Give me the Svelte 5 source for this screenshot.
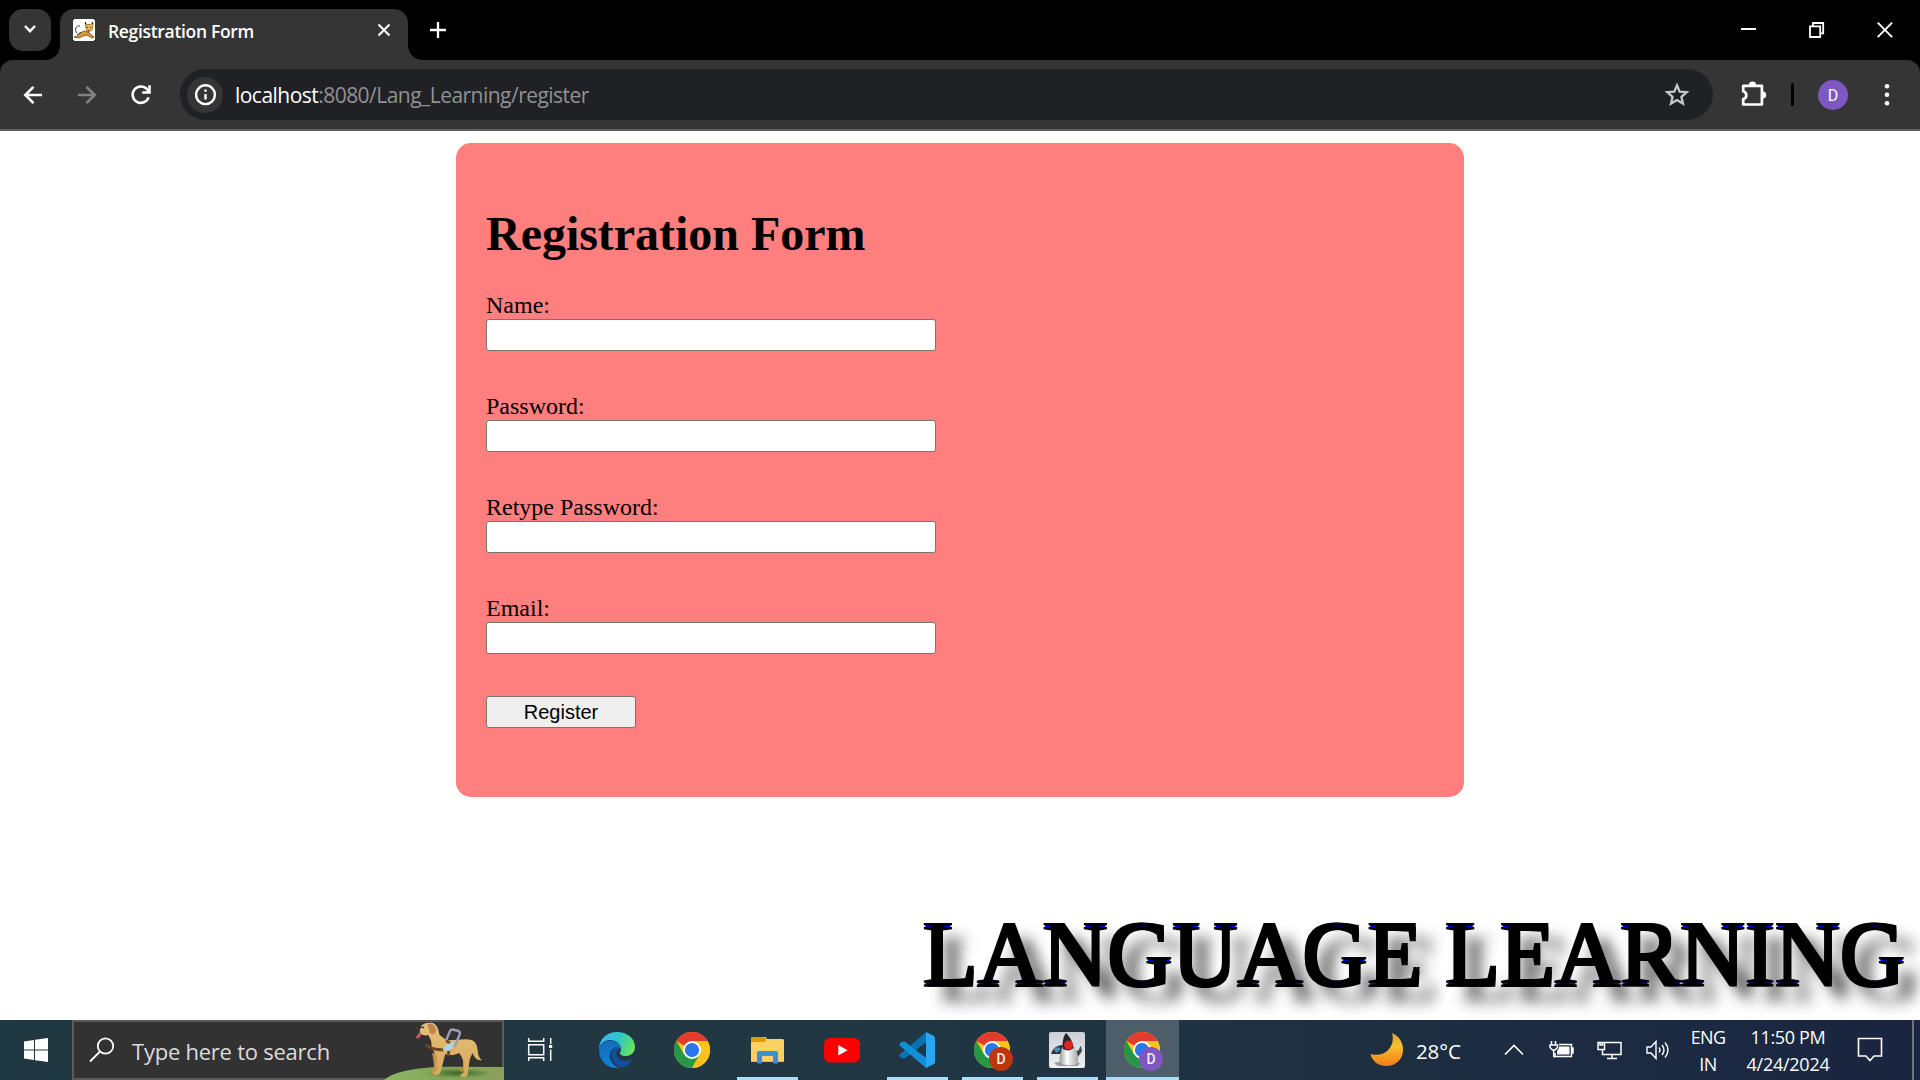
<script>
  const fields = [
    { id: 'name', label: 'Name:', type: 'text' },
    { id: 'password', label: 'Password:', type: 'password' },
    { id: 'retype', label: 'Retype Password:', type: 'password' },
    { id: 'email', label: 'Email:', type: 'text' },
  ];
  const apps = [
    { icon: 'taskview' },
    { icon: 'edge' },
    { icon: 'chrome' },
    { icon: 'folder', open: true },
    { icon: 'youtube' },
    { icon: 'vscode', open: true },
    { icon: 'chrome', open: true, badge: 'red' },
    { icon: 'duke', open: true },
    { icon: 'chrome', open: true, active: true, badge: 'purple' },
  ];
</script>

{#snippet chromeLogo()}
  <svg width="36" height="36" viewBox="0 0 48 48">
    <circle cx="24" cy="24" r="24" fill="#fcc31e" />
    <path d="M24 24 3.2 12A24 24 0 0 1 44.8 12H24z" fill="#e33b2e" />
    <path d="M3.2 12A24 24 0 0 0 24 48L34.4 30 24 24 13.6 30z" fill="#269746" />
    <path d="M24 12H44.8A24 24 0 0 1 24 48L34.4 30z" fill="#fcc31e" />
    <circle cx="24" cy="24" r="12" fill="#fff" />
    <circle cx="24" cy="24" r="9.5" fill="#2a76ea" />
  </svg>
{/snippet}

<div class="screen">
  <header class="tabs">
    <div class="tab-search">
      <svg width="42" height="42" fill="none" stroke="#fff" stroke-width="2.4"><path d="m16 19 5 5.2 5-5.2" /></svg>
    </div>
    <div class="tab">
      <svg class="fav" width="22" height="22" viewBox="0 0 22 22">
        <path fill="#fff" d="M0 0h22v22H0z" />
        <path d="m12 4 2 1.500h3.500L20 3.500l-.5 7-3 2.500-3-1.500z" fill="#e9b548" stroke="#8a6426" stroke-width=".8" />
        <path d="M1 18c4 0 5-4 10-6l4 1 6 5-2 1-5-3-4 1-4 2z" fill="#d89c35" stroke="#68461c" stroke-width=".8" />
        <path d="M4 14C1 11 3 6 7 7m-3 9 4-3m6-5 1 1m2-1 1 1m-3 2 1 1" fill="none" stroke="#333" stroke-width="1" />
        <path d="M0 0h1v1H0zM21 0h1v1h-1zM0 21h1v1H0zM21 21h1v1h-1zM12 3h1v2h-1zM19 3h1v2h-1z" fill="#222" />
      </svg>
      <span class="tab-title">Registration Form</span>
      <svg class="tab-close" width="14" height="14" stroke="#fff" stroke-width="2.1"><path d="m1.5 1.5 11 11m0-11-11 11" /></svg>
    </div>
    <svg class="plus" width="16" height="16" stroke="#fff" stroke-width="2.3"><path d="M8 0v16M0 8h16" /></svg>
    <div class="win">
      <svg width="16" height="16" fill="#fff"><path d="M0 6h15v2H0z" /></svg>
      <svg width="16" height="16" fill="none" stroke="#fff" stroke-width="1.8"><path d="M1 4.4h10.2V15H1zM4 4V1h10.2v10.4h-3" /></svg>
      <svg width="16" height="16" fill="none" stroke="#fff" stroke-width="1.9"><path d="m.7.7 14.4 14.4m0-14.4L.7 15.1" /></svg>
    </div>
  </header>

  <div class="toolbar-wrap">
    <nav class="toolbar">
      <div class="navs">
        <svg width="20" height="20" fill="none" stroke="#fff" stroke-width="2.6"><path d="M19 10H2.5M10.5 1.8 2.3 10l8.2 8.2" /></svg>
        <svg width="20" height="20" fill="none" stroke="#828282" stroke-width="2.6"><path d="M1 10h16.5M9.5 1.8 17.7 10l-8.2 8.2" /></svg>
        <svg width="22" height="22" fill="none" stroke="#fff" stroke-width="2.6"><path d="M17.600 13.400A8.200 8.200 0 1 1 16 5.200l1.700 1.800" /><path d="M18.500 1.200v7.300h-7.300" /></svg>
      </div>
      <div class="omni">
        <div class="info">
          <svg width="36" height="36" fill="none" stroke="#fff" stroke-width="2.4"><circle cx="18.500" cy="17.700" r="9.400" /><path d="M18.500 17v5.500M18.500 12.500v2.200" /></svg>
        </div>
        <div class="url"><b>localhost</b>:8080/Lang_Learning/register</div>
        <svg class="star" width="26" height="26" viewBox="0 0 26 26" fill="none" stroke="#c7c7c7" stroke-width="2.3"><path d="m13 3.300 2.700 6.300 7 .600-5.300 4.600 1.600 6.800-6-3.600-6 3.600 1.600-6.800-5.300-4.600 7-.600z" /></svg>
      </div>
      <svg class="puzzle" width="28" height="28" viewBox="0 0 28 28"><path d="M4.200 4.800h18.700v18.700H4.200v-5.400a4 4 0 0 0 0-7.800z" fill="none" stroke="#fff" stroke-width="2.700" stroke-linejoin="round" /><path d="M10 3.900a3.500 3.300 0 0 1 7 0zM23.900 10.500a3.300 3.500 0 0 1 0 7z" fill="#fff" /></svg>
      <i class="sep"></i>
      <span class="avatar">D</span>
      <svg class="dots" width="6" height="24" fill="#fff"><circle cx="3" cy="3.300" r="2.300" /><circle cx="3" cy="11.800" r="2.300" /><circle cx="3" cy="20.300" r="2.300" /></svg>
    </nav>
  </div>

  <main>
    <form class="card">
      <h1>Registration Form</h1>
      {#each fields as f}
        <div class="field">
          <label for={f.id}>{f.label}</label>
          <input id={f.id} type={f.type} />
        </div>
      {/each}
      <button type="button">Register</button>
    </form>
    <div class="brand">LANGUAGE LEARNING</div>
  </main>

  <footer class="taskbar">
    <div class="start">
      <svg width="24" height="24" fill="#fff"><path d="M0 3.400 10 2v9.500H0zM11 1.800 24 0v11.500H11zM0 12.500h10V22L0 20.600zM11 12.500h13V24l-13-1.800z" /></svg>
    </div>
    <div class="search">
      <svg class="mag" width="26" height="26" fill="none" stroke="#fff" stroke-width="1.800"><circle cx="16.500" cy="9" r="7.700" /><path d="M11 14.500 1 24.500" /></svg>
      <span class="ph">Type here to search</span>
      <svg class="dog" width="124" height="60" viewBox="0 0 124 60">
        <defs>
          <linearGradient id="fur" x1="0" y1="0" x2="0" y2="1"><stop offset="0" stop-color="#e6c07c" /><stop offset=".5" stop-color="#dfb468" /><stop offset="1" stop-color="#d6a75c" /></linearGradient>
          <linearGradient id="hill" x1="0" y1="0" x2="1" y2="0"><stop offset="0" stop-color="#8fb567" /><stop offset=".5" stop-color="#7fa757" /><stop offset="1" stop-color="#8c9f5c" /></linearGradient>
          <radialGradient id="shade"><stop offset="0" stop-color="#3f6627" /><stop offset="1" stop-color="#3f6627" stop-opacity="0" /></radialGradient>
        </defs>
        <path d="M4 60C14 51 38 47 68 46.700l56 .300v13z" fill="url(#hill)" />
        <ellipse cx="78" cy="53" rx="34" ry="5" fill="url(#shade)" />
        <g transform="translate(7 0) scale(.94 1)">
          <path d="M79 34c1 5 3 8 2 12l-4 4c1 2 5 2 7 1 2-6 4-10 5-15z" fill="#be8b41" />
          <path d="M48 33c1 5 2 9 2 15l-4 4c1 2 5 2 8 1l2-18z" fill="#c6934a" />
          <path d="M36 6c3-3 8-4 13-3 5 2 6 8 7 12l7 5c8 1 20-2 27 0 6 2 6 8 7 14 1 3 2 5 4 6-5 1-8-2-10-7l-3 6-2 15c-1 3-4 3-7 3l-1-2 4-3-1-12c-1-3-3-5-4-7-5 2-9 3-15 1l-5 18c-1 3-4 3-7 3l-1-2 4-3V36c-4-4-6-9-6-15l-3-6c-3 1-7 0-9-2v-4l3-2z" fill="url(#fur)" />
          <path d="M43 4c5-2 10 2 9 8-2 3-6 3-7-1z" fill="#bd864c" />
          <path d="m33 13 4 1-2 3-3 2-1-3 2-1z" fill="#dc5660" />
          <path d="M30 6h3v3h-3z" fill="#4d342a" /><circle cx="38.500" cy="7.500" r="1.100" fill="#4c3725" />
          <path d="m41 25 9 4 10 1M63 20l4 4-2 12" fill="none" stroke="#73451d" stroke-width="3" />
          <path d="m59 30 5-6 8-2-5 9z" fill="#a7d8f0" />
          <path d="m63 20 4-9c1-2 2-2 5-1l4 1c2 1 2 2 1 4l-5 12" fill="none" stroke="#9d9dbb" stroke-width="2.600" />
        </g>
      </svg>
    </div>

    <div class="apps">
      {#each apps as a}
        <div class="app" class:open={a.open} class:active={a.active}>
          {#if a.icon === 'taskview'}
            <svg width="36" height="36" fill="none" stroke="#fff" stroke-width="1.500"><path d="M4.700 6v3.300h15V6M4.700 29v-3.300h15V29M4.700 12.700h15v10h-15zM26.700 6v6M26.700 17.500V29" /><path d="M25 13h3.200v3H25z" fill="#fff" stroke="none" /></svg>
          {:else if a.icon === 'edge'}
            <svg width="36" height="36" viewBox="0 0 36 36">
              <defs>
                <linearGradient id="e1" x1="0" y1=".3" x2="1" y2=".6"><stop offset="0" stop-color="#35b9f0" /><stop offset=".5" stop-color="#2fc5ca" /><stop offset="1" stop-color="#69e553" /></linearGradient>
                <linearGradient id="e2" x1="0" y1="0" x2=".3" y2="1"><stop offset="0" stop-color="#1468b5" /><stop offset="1" stop-color="#0d83dd" /></linearGradient>
              </defs>
              <path d="M0 17C0 7 8 0 18 0c11 0 18 7 18 15 0 6-5 9-9 9-5 0-6-2-6-3 0-1 1-2 1-4 0-5-5-9-11-9C5 8 1 12 0 17z" fill="url(#e1)" />
              <path d="M0 18C0 12 5 8.500 11 8.500c7 0 11 5 10.500 8.500-3-3-8-1-9.500 2-4 8 2 15 9 17A18 18 0 0 1 0 18z" fill="url(#e2)" />
              <path d="M13.500 17c-4 8 1 16 9 18.500 5-1 9-4 11-8-6 3-15 1-16-5-.400-3 1-5 3-6-3-2-6-1-7 .500z" fill="#124f9c" />
            </svg>
          {:else if a.icon === 'chrome'}
            {@render chromeLogo()}
            {#if a.badge}<span class="badge {a.badge}">D</span>{/if}
          {:else if a.icon === 'folder'}
            <svg width="36" height="36" viewBox="0 0 36 36"><path d="M3 5h14l1 2h16l1 1v22H2V6z" fill="#fbd161" /><path d="M2 6q0-1 1-1h12l2 1v3l-2 1H2z" fill="#dd9d0b" /><path d="M2 29.200h33V30H2z" fill="#e5ae35" /><path d="M8 31.500V21q0-2 2-2h17q2 0 2 2v10.500h-5V24H13v7.500z" fill="#398fd5" /></svg>
          {:else if a.icon === 'youtube'}
            <svg width="36" height="36"><rect y="6" width="36" height="24.500" rx="6" fill="#f00" /><path d="m14.300 13 9.300 5.300-9.300 5.300z" fill="#fff" /></svg>
          {:else if a.icon === 'vscode'}
            <svg width="36" height="36" viewBox="0 0 36 36"><path d="m0 23.500 3 3 3-.300 21-16V0L1 22.300z" fill="#0872b5" /><path d="m0 12.500 3-3 3 .300 21 16V36L1 13.700z" fill="#1290d6" /><path d="M27 0l8 4 1 1.500v25L35 32l-8 4z" fill="#29a7f2" /></svg>
          {:else}
            <svg width="36" height="36" viewBox="0 0 36 36">
              <defs>
                <linearGradient id="d1" x1="0" y1="0" x2="0" y2="1"><stop offset="0" stop-color="#cbd0d8" /><stop offset="1" stop-color="#eef0f3" /></linearGradient>
                <linearGradient id="d2"><stop offset="0" stop-color="#999" /><stop offset=".4" stop-color="#fff" /><stop offset="1" stop-color="#a5a5a5" /></linearGradient>
              </defs>
              <rect width="36" height="36" rx="2" fill="url(#d1)" />
              <path d="M2 22c2-7 7-9 13-9l-2 9z" fill="#333" /><path d="m4 17 5-2 3 2-4 4z" fill="#4b8fc0" />
              <path d="M27 19c4 0 3-4 5-5l1 5-4 6z" fill="#444" />
              <path d="M5 31q12-4 26 0l-2 3H9z" fill="#9a9ca0" />
              <path d="M14 14h11c3 6 6 13 3 18-5 2-11 1-16 0-3-4-1-11 2-18z" fill="url(#d2)" />
              <path d="M17 1c4 4 7 9 7.500 15-3 3-7 3-10.500 1-1-6 0-12 3-16z" fill="#252525" />
              <circle cx="19.500" cy="13" r="4.500" fill="#e02424" />
            </svg>
          {/if}
        </div>
      {/each}
    </div>

    <div class="tray">
      <svg class="moon" width="34" height="36" viewBox="0 0 34 36"><defs><linearGradient id="mn" x1="0" y1="0" x2="0" y2="1"><stop offset="0" stop-color="#d6a53d" /><stop offset=".4" stop-color="#f9bf31" /><stop offset="1" stop-color="#f27b16" /></linearGradient></defs><path d="M22 1c17 7 14 33-6 33C8 34 2 29 .500 22 14 26 26 15 22 1z" fill="url(#mn)" /></svg>
      <span class="temp">28°C</span>
      <svg class="up" width="20" height="12" fill="none" stroke="#fff" stroke-width="1.600"><path d="m1 10.500 9-9 9 9" /></svg>
      <svg class="bat" width="26" height="20" fill="none" stroke="#fff" stroke-width="1.500"><path d="M10 4.500h12.500v12H6V13M22.500 8H24v5h-1.500" /><path d="M10 6.500h10.500v8H8V11l2-3z" fill="#fff" stroke="none" /><path d="M2.500 1v3.500m4-3.500v3.500M1 5h7.500v2.500L6 10H3.500L1 7.500zM4.700 10v6.500H7" /></svg>
      <svg class="net" width="26" height="20" fill="none" stroke="#fff" stroke-width="1.500"><path d="M8 2.500h16v12H5.500V10M15 14.500v4M10 18.500h10M1 2.500h6.500v7H1zM3 2.500V5h2.500V2.500" /></svg>
      <svg class="vol" width="24" height="20" fill="none" stroke="#fff" stroke-width="1.400"><path d="M1 7h4l5-5.500v17L5 13H1zM13 7.500q2 2.500 0 5M16 5q4 5 0 10M19 2.500q6 7.500 0 15" /></svg>
      <div class="two lang"><span>ENG</span><span>IN</span></div>
      <div class="two clock"><span class="time">11:50 PM</span><span class="date">4/24/2024</span></div>
      <svg class="note" width="26" height="26" fill="none" stroke="#fff" stroke-width="1.600"><path d="M1.500 1.500h23v17.500h-7.500l-4 4.500-4-4.500H1.500z" /></svg>
      <i class="peek"></i>
    </div>
  </footer>
</div>

<style>
  :global(body) { margin: 0; background: #fff; overflow: hidden; }
  svg { display: block; flex: none; }
  .screen { width: 1920px; height: 1080px; display: flex; flex-direction: column; overflow: hidden; background: #fff; }

  .tabs { height: 60px; flex: none; background: #000; display: flex; box-sizing: border-box; padding: 9px 26px 0 9px; font-family: 'Open Sans', sans-serif; }
  .tab-search { width: 42px; height: 42px; border-radius: 14px; background: #353535; }
  .tab-search svg { margin-top: -2px; }
  .tab { position: relative; margin-left: 9px; width: 348px; height: 51px; box-sizing: border-box; background: #353535; border-radius: 14px 14px 0 0; display: flex; align-items: flex-start; padding: 10px 17px 0 13px; }
  .tab::before, .tab::after { content: ''; position: absolute; bottom: 0; width: 14px; height: 14px; }
  .tab::before { left: -14px; background: radial-gradient(circle at 0 0, transparent 13.5px, #353535 14px); }
  .tab::after { right: -14px; background: radial-gradient(circle at 100% 0, transparent 13.5px, #353535 14px); }
  .tab-title { margin-left: 13px; color: #fff; font-size: 17.5px; font-weight: 650; line-height: 25px; letter-spacing: -0.32px; white-space: nowrap; }
  .tab-close { margin: 4px 0 0 auto; }
  .plus { margin: 13px 0 0 22px; }
  .win { margin: 13px 1px 0 auto; display: flex; gap: 52px; }

  .toolbar-wrap { flex: none; height: 71px; background: #000; }
  .toolbar { height: 71px; box-sizing: border-box; background: #353535; border-radius: 13px 13px 0 0; border-bottom: 2px solid #5f5f60; display: flex; align-items: center; padding: 0 30px 0 23px; }
  .navs { display: flex; align-items: center; width: 157px; gap: 34px; }
  .omni { width: 1533px; height: 51px; border-radius: 26px; background: #202124; display: flex; align-items: center; box-sizing: border-box; padding: 0 23px 0 7px; }
  .info { width: 36px; height: 36px; border-radius: 50%; background: #353535; }
  .url { margin: 0 auto 0 12px; font: 21px/28px 'Open Sans', sans-serif; letter-spacing: -0.53px; color: #909194; white-space: nowrap; }
  .url b { font-weight: 400; color: #fff; }
  .puzzle { margin-left: 26px; }
  .sep { width: 3px; height: 23px; border-radius: 2px; background: #000; margin-left: 24px; }
  .avatar { width: 30px; height: 30px; border-radius: 50%; background: #7e57c2; margin-left: 24px; color: #fff; font: 16px/31px Roboto, sans-serif; text-align: center; }
  .dots { margin-left: auto; }

  main { flex: 1; min-height: 0; display: flex; flex-direction: column; overflow: hidden; font-family: 'Liberation Serif', serif; color: #000; }
  .card { width: 1008px; height: 654px; margin: 12px auto 0; box-sizing: border-box; padding: 63px 30px 0; border-radius: 15px; background: #ff7f7f; flex: none; }
  h1 { margin: 0 0 31px; font-size: 48px; line-height: 55px; font-weight: 700; letter-spacing: -0.03px; }
  .field { display: flex; flex-direction: column; margin-bottom: 42px; }
  label { font-size: 24px; line-height: 27px; }
  input { width: 450px; height: 32px; box-sizing: border-box; border: 1px solid #767676; border-radius: 3px; background: #fff; padding: 0 4px; }
  button { display: block; width: 150px; height: 32px; box-sizing: border-box; margin: 0; padding: 0; border: 1px solid #767676; border-radius: 3px; background: #efefef; color: #000; font: 20px/28px 'Liberation Sans', sans-serif; }
  .brand { margin: auto 15px 0 auto; height: 117px; font-size: 90px; line-height: 104px; white-space: nowrap; color: transparent;
    text-shadow: 1.5px 1.8px 0 #000, -1.5px 1.8px 0 #000, 1.5px -1.8px 0 #000, -1.5px -1.8px 0 #000, 0 0 0 #0000ff, 15px 15px 15px #000000e0; }

  .taskbar { height: 60px; flex: none; display: flex; background: linear-gradient(90deg, #203841 0%, #213743 45%, #1f3140 65%, #1c2b42 82%, #1a2540 100%); color: #fff; font-family: 'Open Sans', sans-serif; }
  .start { width: 72px; display: flex; align-items: center; justify-content: center; }
  .search { width: 432px; box-sizing: border-box; border: 2px solid #5b5b5d; background: #323233; display: flex; align-items: center; padding-left: 15px; }
  .ph { margin-left: 17px; padding-top: 2px; font-size: 22px; letter-spacing: -0.24px; color: #dcdcdc; white-space: nowrap; }
  .dog { margin: 0 -2px 0 auto; }
  .apps { display: flex; gap: 2px; padding-left: 2px; }
  .app { position: relative; width: 73px; display: flex; align-items: center; justify-content: center; box-sizing: border-box; padding-right: 2px; }
  .open::after { content: ''; position: absolute; bottom: 0; left: 6px; right: 6px; height: 3px; background: #a9dff8; }
  .active { background: #4d5d69; }
  .active::after { left: 0; right: 0; }
  .badge { position: absolute; left: 33px; top: 27px; width: 24px; height: 24px; border-radius: 50%; font: 500 14px/24px Roboto, sans-serif; text-align: center; color: #eee; }
  .red { background: #bf360c; }
  .purple { background: #7e57c2; }
  .tray { margin-left: auto; display: flex; align-items: center; }
  .temp { margin-left: 12px; padding-top: 1px; width: 88px; font-size: 20.5px; letter-spacing: -0.1px; }
  .bat { margin-left: 25px; }
  .net { margin-left: 22px; }
  .vol { margin-left: 23px; }
  .two { display: flex; flex-direction: column; align-items: center; font-size: 18px; line-height: 27px; letter-spacing: -0.65px; white-space: nowrap; }
  .lang { width: 76px; padding-top: 2px; }
  .clock { width: 84px; padding-top: 1px; }
  .time { letter-spacing: -0.35px; }
  .date { letter-spacing: -0.25px; }
  .note { margin-left: 27px; }
  .peek { width: 2px; height: 60px; background: #6d7585; margin: 0 6px 0 29px; }
</style>
